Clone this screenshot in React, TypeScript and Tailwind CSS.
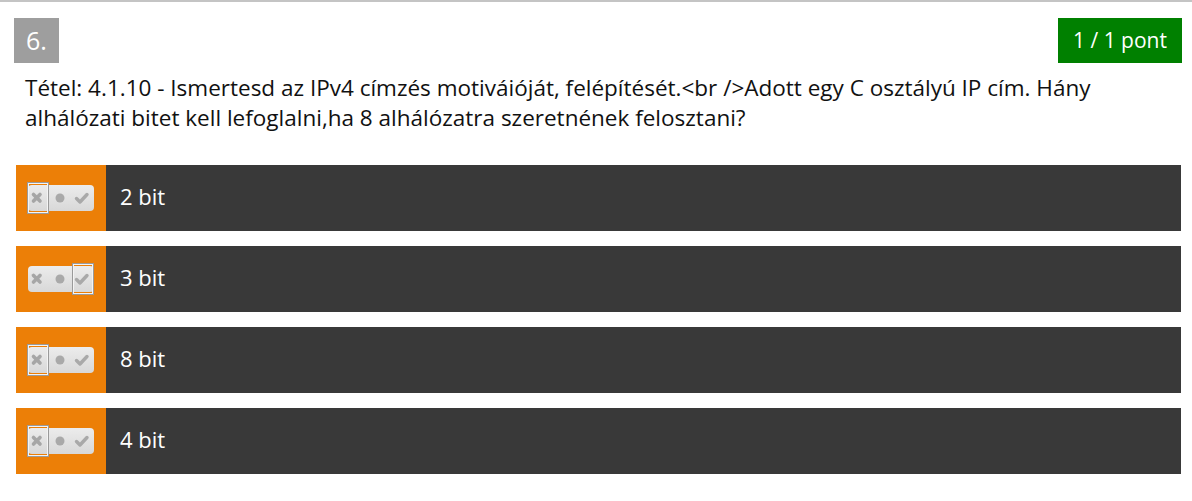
import React from "react";

function Toggle({ sel }: { sel: "x" | "check" }) {
  return (
    <div className="relative w-[67px] h-[32px] flex items-center">
      <div className="absolute left-[1px] right-0 top-[3px] bottom-[3px] rounded-[4px] bg-gradient-to-b from-[#ececec] to-[#d8d8d8]" />
      <svg className="relative" width="67" height="32" viewBox="0 0 67 32">
        <g stroke="#a6a6a6" strokeWidth="3.6" strokeLinecap="round">
          <line x1="6.5" y1="12.5" x2="13" y2="19" />
          <line x1="13" y1="12.5" x2="6.5" y2="19" />
        </g>
        <circle cx="33" cy="16" r="4.5" fill="#a9a9a9" />
        <path d="M49.5 16.5 L53 20 L60 12.5" stroke="#a9a9a9" strokeWidth="3.4" fill="none" strokeLinecap="round" strokeLinejoin="round" />
      </svg>
      <div
        className={
          "absolute top-0 h-[32px] w-[22px] border border-[#9a9a9a] " +
          (sel === "x" ? "left-0" : "right-0")
        }
      >
        <div className="w-full h-full border border-[#f4f4f4]" />
      </div>
    </div>
  );
}

const opts: { t: string; sel: "x" | "check" }[] = [
  { t: "2 bit", sel: "x" },
  { t: "3 bit", sel: "check" },
  { t: "8 bit", sel: "x" },
  { t: "4 bit", sel: "x" },
];

export default function App() {
  return (
    <div
      className="w-[1192px] h-[501px] bg-white border-t-2 border-[#c4c4c4] overflow-hidden"
      style={{ fontFamily: '"Open Sans", sans-serif' }}
    >
      <div className="flex justify-between items-start pl-[14px] pr-[10px] pt-[16px]">
        <div className="w-[45px] h-[45px] bg-[#9e9e9e] text-white text-[25px] flex items-center justify-center">
          6.
        </div>
        <div className="w-[124px] h-[45px] bg-[#008000] text-white text-[21px] flex items-center justify-center">
          1 / 1 pont
        </div>
      </div>
      <div className="pl-[25px] pr-[60px] mt-[10px] text-[22.5px] leading-[30px] text-[#111]">
        Tétel: 4.1.10 - Ismertesd az IPv4 címzés motiváióját, felépítését.&lt;br /&gt;Adott egy C osztályú IP cím. Hány alhálózati bitet kell lefoglalni,ha 8 alhálózatra szeretnének felosztani?
      </div>
      <div className="flex flex-col gap-[15px] mt-[32px] ml-[16px] mr-[11px]">
        {opts.map((o) => (
          <div key={o.t} className="flex h-[66px] bg-[#393939]">
            <div className="w-[90px] bg-[#ec7f07] flex items-center pl-[11px]">
              <Toggle sel={o.sel} />
            </div>
            <div className="flex items-center pl-[14px] pb-[4px] text-white text-[22px]">{o.t}</div>
          </div>
        ))}
      </div>
    </div>
  );
}
